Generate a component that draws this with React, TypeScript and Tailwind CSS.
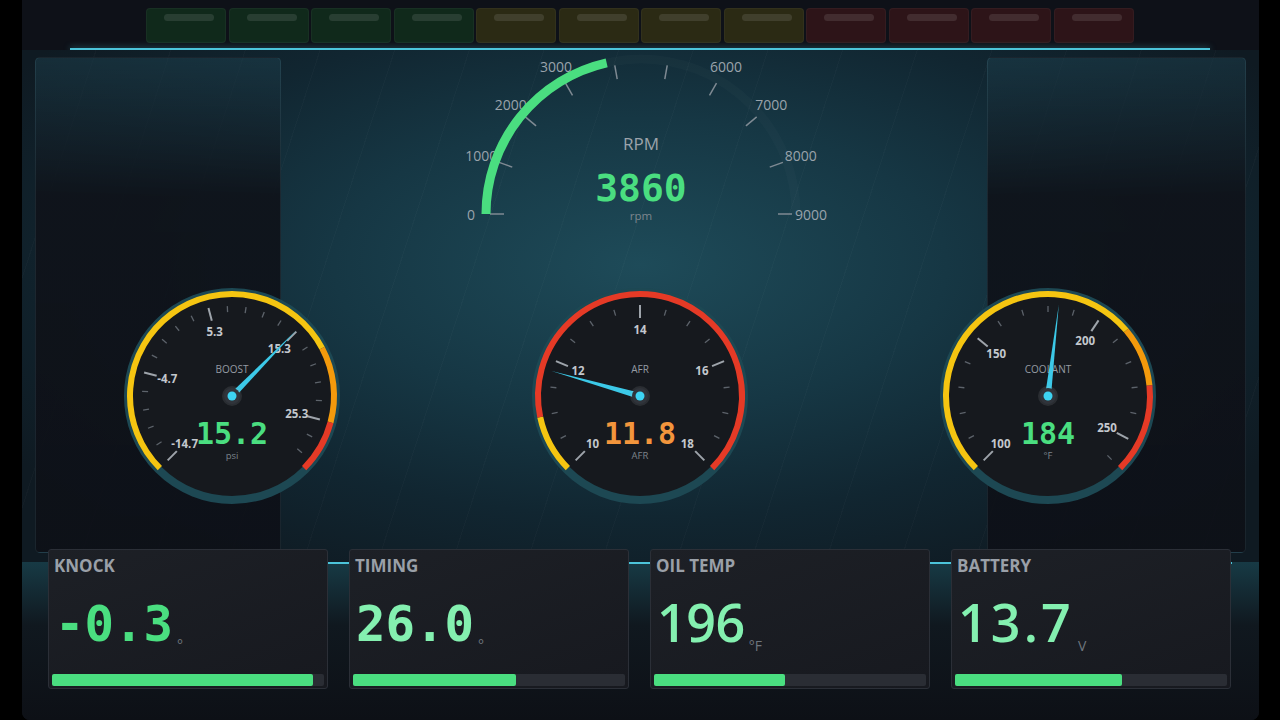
import React from "react"

const SANS = "'Open Sans', 'Noto Sans', sans-serif"
const MONO = "'DejaVu Sans Mono', monospace"

type Zone = { from: number; to: number; color: string }

function polar(c: number, r: number, a: number) {
  const rad = (a * Math.PI) / 180
  return [c + r * Math.sin(rad), c - r * Math.cos(rad)]
}

function arcPath(c: number, r: number, a1: number, a2: number) {
  const [x1, y1] = polar(c, r, a1)
  const [x2, y2] = polar(c, r, a2)
  const large = a2 - a1 > 180 ? 1 : 0
  return `M ${x1} ${y1} A ${r} ${r} 0 ${large} 1 ${x2} ${y2}`
}

function Gauge(props: {
  min: number
  max: number
  majors: number[]
  minorStep: number
  label: string
  unit: string
  value: number
  valueText: string
  color: string
  zones: Zone[]
}) {
  const { min, max, majors, minorStep, label, unit, value, valueText, color, zones } = props
  const c = 110
  const ang = (v: number) => -135 + ((v - min) / (max - min)) * 270
  const minors: number[] = []
  for (let v = min; v <= max + 1e-6; v += minorStep) {
    if (!majors.some((m) => Math.abs(m - v) < 1e-3)) minors.push(v)
  }
  const a = ang(value)
  const tip = polar(c, 92, a)
  const bl = polar(c, 3, a - 90)
  const br = polar(c, 3, a + 90)

  return (
    <svg width="220" height="220" viewBox="0 0 220 220" className="shrink-0">
      <circle cx={c} cy={c} r={104} fill="#16191e" stroke="#1d4853" strokeWidth={8} />
      {zones.map((z, i) => (
        <path key={i} d={arcPath(c, 102, z.from, z.to)} stroke={z.color} strokeWidth={6} fill="none" />
      ))}
      {minors.map((v, i) => {
        const [x1, y1] = polar(c, 84, ang(v))
        const [x2, y2] = polar(c, 90, ang(v))
        return <line key={i} x1={x1} y1={y1} x2={x2} y2={y2} stroke="#5d636b" strokeWidth={1.3} />
      })}
      {majors.map((v, i) => {
        const [x1, y1] = polar(c, 78, ang(v))
        const [x2, y2] = polar(c, 91, ang(v))
        const [tx, ty] = polar(c, 67, ang(v))
        return (
          <g key={i}>
            <line x1={x1} y1={y1} x2={x2} y2={y2} stroke="#9ea4ab" strokeWidth={2} />
            <text
              x={tx}
              y={ty}
              textAnchor="middle"
              dominantBaseline="central"
              fontFamily={SANS}
              fontWeight={700}
              fontSize={11.5}
              fill="#c3c7cd"
            >
              {Number.isInteger(v) ? String(v) : v.toFixed(1)}
            </text>
          </g>
        )
      })}
      <text x={c} y={c - 27} textAnchor="middle" dominantBaseline="central" fontFamily={SANS} fontSize={10} fill="#959ba3">
        {label}
      </text>
      <text
        x={c}
        y={c + 37}
        textAnchor="middle"
        dominantBaseline="central"
        fontFamily={MONO}
        fontWeight={700}
        fontSize={30}
        fill={color}
      >
        {valueText}
      </text>
      <text x={c} y={c + 59} textAnchor="middle" dominantBaseline="central" fontFamily={SANS} fontSize={9.5} fill="#7c838b">
        {unit}
      </text>
      <polygon points={`${bl[0]},${bl[1]} ${tip[0]},${tip[1]} ${br[0]},${br[1]}`} fill="#3cc9e8" />
      <circle cx={c} cy={c} r={10} fill="rgba(190,195,200,0.12)" />
      <circle cx={c} cy={c} r={8} fill="#30343b" />
      <circle cx={c} cy={c} r={4.5} fill="#3dd3f2" />
    </svg>
  )
}

function RpmGauge() {
  const cx = 200
  const cy = 164
  const pt = (r: number, deg: number) => {
    const rad = (deg * Math.PI) / 180
    return [cx + r * Math.cos(rad), cy - r * Math.sin(rad)]
  }
  const ticks = Array.from({ length: 10 }, (_, i) => i)
  const endDeg = 180 - (3860 / 9000) * 180
  const [ax, ay] = pt(155, 180)
  const [bx, by] = pt(155, endDeg)
  const [tx1, ty1] = pt(155, 180)
  const [tx2, ty2] = pt(155, 0)
  return (
    <svg width="400" height="180" viewBox="0 0 400 180" className="shrink-0 self-center">
      <path d={`M ${tx1} ${ty1} A 155 155 0 0 1 ${tx2} ${ty2}`} stroke="rgba(255,255,255,0.018)" strokeWidth={9} fill="none" />
      {ticks.map((i) => {
        const deg = 180 - i * 20
        const [x1, y1] = pt(137, deg)
        const [x2, y2] = pt(151, deg)
        const [lx, ly] = pt(170, deg)
        return (
          <g key={i}>
            <line x1={x1} y1={y1} x2={x2} y2={y2} stroke="#7f8a93" strokeWidth={1.5} />
            {i !== 4 && i !== 5 && (
              <text x={lx} y={ly} textAnchor="middle" dominantBaseline="central" fontFamily={SANS} fontSize={14} fill="#9aa3ab">
                {i * 1000}
              </text>
            )}
          </g>
        )
      })}
      <path d={`M ${ax} ${ay} A 155 155 0 0 1 ${bx} ${by}`} stroke="#4ade80" strokeWidth={9} fill="none" />
      <text x={cx} y={93} textAnchor="middle" dominantBaseline="central" fontFamily={SANS} fontSize={17} fill="#9ca3ab">
        RPM
      </text>
      <text
        x={cx}
        y={138}
        textAnchor="middle"
        dominantBaseline="central"
        fontFamily={MONO}
        fontWeight={700}
        fontSize={38}
        fill="#4ade80"
      >
        3860
      </text>
      <text x={cx} y={165} textAnchor="middle" dominantBaseline="central" fontFamily={SANS} fontSize={11.5} fill="#7d868e">
        rpm
      </text>
    </svg>
  )
}

const lights = [
  "bg-[#10291b]", "bg-[#10291b]", "bg-[#10291b]", "bg-[#10291b]",
  "bg-[#2b2a14]", "bg-[#2b2a14]", "bg-[#2b2a14]", "bg-[#2b2a14]",
  "bg-[#2d1418]", "bg-[#2d1418]", "bg-[#2d1418]", "bg-[#2d1418]",
]

const cards = [
  { title: "KNOCK", value: "-0.3", unit: "°", pct: 96, mono: true, color: "text-[#4ade80]" },
  { title: "TIMING", value: "26.0", unit: "°", pct: 60, mono: true, color: "text-[#84f0b0]" },
  { title: "OIL TEMP", value: "196", unit: "°F", pct: 48, mono: false, color: "text-[#84f0b0]" },
  { title: "BATTERY", value: "13.7", unit: "V", pct: 61.5, mono: false, color: "text-[#84f0b0]" },
]

function StatCard({ c }: { c: (typeof cards)[number] }) {
  return (
    <div className="flex h-[140px] w-[280px] shrink-0 flex-col rounded-[3px] border border-[#2b2f37] bg-[linear-gradient(160deg,#1d2026_0%,#17191f_100%)]">
      <div className="pl-[5px] pt-[5px] text-[17px] font-bold leading-[22px] text-[#9aa0a8]">{c.title}</div>
      <div className={`flex items-baseline pl-[6px] ${c.mono ? "mt-[24px]" : "mt-[21px]"}`}>
        {c.mono ? (
          <span className={`font-['DejaVu_Sans_Mono',monospace] text-[49px] font-bold leading-[48px] ${c.color}`}>{c.value}</span>
        ) : (
          <span className={`text-[52px] font-semibold leading-[48px] ${c.color} ${c.value === "13.7" ? "tracking-[0.06em]" : "tracking-[-0.01em]"}`}>
            {c.value}
          </span>
        )}
        <span className="ml-[4px] translate-y-[9px] text-[14px] text-[#6e757d]">{c.unit}</span>
      </div>
      <div className="mx-[3px] mb-[2px] mt-auto h-[12px] rounded-[2px] bg-[#2a2d34]">
        <div className="h-full rounded-[2px] bg-[#4ade80]" style={{ width: `${c.pct}%` }} />
      </div>
    </div>
  )
}

export default function App() {
  return (
    <div className="flex h-[720px] w-[1280px] bg-black font-['Open_Sans','Noto_Sans',sans-serif]">
      <div className="ml-[22px] flex h-full w-[1237px] flex-col overflow-hidden rounded-b-[8px] bg-[#0e1118]">
        {/* shift lights */}
        <div className="flex h-[50px] shrink-0 flex-col">
          <div className="ml-[124px] mt-[8px] flex gap-[2.5px]">
            {lights.map((l, i) => (
              <div key={i} className={`h-[35px] w-[80px] rounded-[4px] border border-white/[0.035] ${l}`}>
                <div className="ml-[17px] mt-[5px] h-[7px] w-[50px] rounded-full bg-white/[0.1]" />
              </div>
            ))}
          </div>
          <div className="ml-[48px] mt-auto h-[2px] w-[1140px] bg-[#4cc4da] shadow-[0_0_6px_rgba(76,196,218,0.6)]" />
        </div>

        {/* gauges */}
        <div className="grid h-[512px] shrink-0 bg-[radial-gradient(ellipse_at_50%_42%,#1e4b59_0%,#163744_35%,#112631_60%,#0f1a22_85%)]">
          <div className="col-start-1 row-start-1 flex items-start bg-[repeating-linear-gradient(108deg,transparent_0px,transparent_70px,rgba(255,255,255,0.02)_70px,rgba(255,255,255,0.02)_71px)]">
            <div className="ml-[13px] mt-[7px] h-[496px] w-[246px] rounded-[5px] border border-[#7fb6c6]/[0.12] bg-[linear-gradient(180deg,rgba(30,66,80,0.5)_0%,rgba(15,19,26,0.93)_28%,rgba(14,17,24,0.95)_100%)]" />
            <div className="flex-1" />
            <div className="mr-[13px] mt-[7px] h-[496px] w-[259px] rounded-[5px] border border-[#7fb6c6]/[0.12] bg-[linear-gradient(180deg,rgba(30,66,80,0.5)_0%,rgba(15,19,26,0.93)_28%,rgba(14,17,24,0.95)_100%)]" />
          </div>
          <div className="col-start-1 row-start-1 flex flex-col">
            <RpmGauge />
            <div className="ml-[100px] mt-[56px] flex gap-[188px]">
              <Gauge
                min={-14.7}
                max={30.3}
                majors={[-14.7, -4.7, 5.3, 15.3, 25.3]}
                minorStep={2}
                label="BOOST"
                unit="psi"
                value={15.2}
                valueText="15.2"
                color="#4ade80"
                zones={[
                  { from: -135, to: 62, color: "#f5c511" },
                  { from: 62, to: 105, color: "#f39a0c" },
                  { from: 105, to: 135, color: "#e53a26" },
                ]}
              />
              <Gauge
                min={10}
                max={18}
                majors={[10, 12, 14, 16, 18]}
                minorStep={0.5}
                label="AFR"
                unit="AFR"
                value={11.8}
                valueText="11.8"
                color="#f2953c"
                zones={[
                  { from: -135, to: -102, color: "#f5c511" },
                  { from: -102, to: 135, color: "#e53a26" },
                ]}
              />
              <Gauge
                min={100}
                max={260}
                majors={[100, 150, 200, 250]}
                minorStep={10}
                label="COOLANT"
                unit="°F"
                value={184}
                valueText="184"
                color="#4ade80"
                zones={[
                  { from: -135, to: 50, color: "#f5c511" },
                  { from: 50, to: 84, color: "#f39a0c" },
                  { from: 84, to: 135, color: "#e53a26" },
                ]}
              />
            </div>
          </div>
        </div>

        {/* stat cards */}
        <div className="flex flex-1 flex-col bg-[linear-gradient(180deg,#173a45_0%,#10181f_40%,#0d1016_100%)]">
          <div className="ml-[26px] h-[2px] w-[1184px] bg-[#4cc4da]" />
          <div className="-mt-[15px] ml-[26px] flex gap-[21px]">
            {cards.map((c) => (
              <StatCard key={c.title} c={c} />
            ))}
          </div>
        </div>
      </div>
    </div>
  )
}
